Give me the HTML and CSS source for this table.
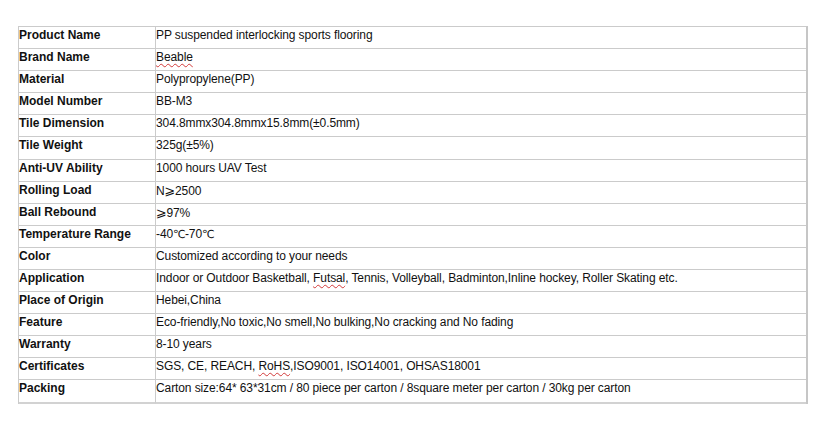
FILE: index.html
```html
<!DOCTYPE html>
<html lang="en">
<head>
<meta charset="utf-8">
<title>Product specifications</title>
<link rel="stylesheet" href="styles.css">
</head>
<body>
<table class="spec">
  <colgroup><col class="c-label"><col class="c-value"></colgroup>
  <tbody>
    <tr><th>Product Name</th><td>PP suspended interlocking sports flooring</td></tr>
    <tr><th>Brand Name</th><td><span class="spell">Beable</span></td></tr>
    <tr><th>Material</th><td>Polypropylene(PP)</td></tr>
    <tr><th>Model Number</th><td>BB-M3</td></tr>
    <tr><th>Tile Dimension</th><td>304.8mmx304.8mmx15.8mm(±0.5mm)</td></tr>
    <tr class="tall"><th>Tile Weight</th><td>325g(±5%)</td></tr>
    <tr><th>Anti-UV Ability</th><td>1000 hours UAV Test</td></tr>
    <tr><th>Rolling Load</th><td>N<span class="sym">⩾</span>2500</td></tr>
    <tr><th>Ball Rebound</th><td><span class="sym">⩾</span>97%</td></tr>
    <tr class="tall"><th>Temperature Range</th><td>-40<span class="deg">℃</span>-70<span class="deg">℃</span></td></tr>
    <tr><th>Color</th><td>Customized according to your needs</td></tr>
    <tr><th>Application</th><td>Indoor or Outdoor Basketball, <span class="spell">Futsal</span>, Tennis, Volleyball, Badminton,Inline hockey, Roller Skating etc.</td></tr>
    <tr><th>Place of Origin</th><td>Hebei,China</td></tr>
    <tr><th>Feature</th><td>Eco-friendly,No toxic,No smell,No bulking,No cracking and No fading</td></tr>
    <tr><th>Warranty</th><td>8-10 years</td></tr>
    <tr><th>Certificates</th><td>SGS, CE, REACH, <span class="spell">RoHS</span>,ISO9001, ISO14001, OHSAS18001</td></tr>
    <tr class="last"><th>Packing</th><td>Carton size:64* 63*31cm / 80 piece per carton / 8square meter per carton / 30kg per carton</td></tr>
  </tbody>
</table>
</body>
</html>
```

FILE: styles.css
```css
html, body {
  margin: 0;
  padding: 0;
  background: #ffffff;
}

body {
  padding: 26px 0 0 18px;
  font-family: "Liberation Sans", Arial, "DejaVu Sans", sans-serif;
  font-size: 12px;
  color: #111111;
}

.spec {
  border-collapse: separate;
  border-spacing: 0;
  table-layout: fixed;
  width: 788px;
  border-top: 1px solid #cbcbcb;
  border-left: 1px solid #cbcbcb;
  border-right: 2px solid #c6c6c6;
}

.c-label { width: 137px; }
.c-value { width: 650px; }

.spec th,
.spec td {
  height: 20px;
  padding: 1px 0 0 0;
  line-height: 15px;
  vertical-align: top;
  text-align: left;
  white-space: nowrap;
  border-bottom: 1px solid #cbcbcb;
}

.spec th {
  font-weight: bold;
  border-right: 1px solid #cbcbcb;
}

.spec td {
  font-weight: normal;
  letter-spacing: -0.1px;
}

.spec tr.tall th,
.spec tr.tall td {
  height: 20.5px;
}

.spec tr.last th,
.spec tr.last td {
  height: 21px;
  border-bottom: 2px solid #d2d2d2;
}

.sym {
  font-family: "DejaVu Sans", sans-serif;
  font-size: 13px;
  letter-spacing: -0.5px;
}

.deg {
  font-family: "DejaVu Sans", sans-serif;
  font-size: 11px;
  letter-spacing: -0.5px;
}

.spell {
  text-decoration: underline wavy #d23a3a;
  text-decoration-thickness: 1px;
  text-underline-offset: 2px;
}
```
